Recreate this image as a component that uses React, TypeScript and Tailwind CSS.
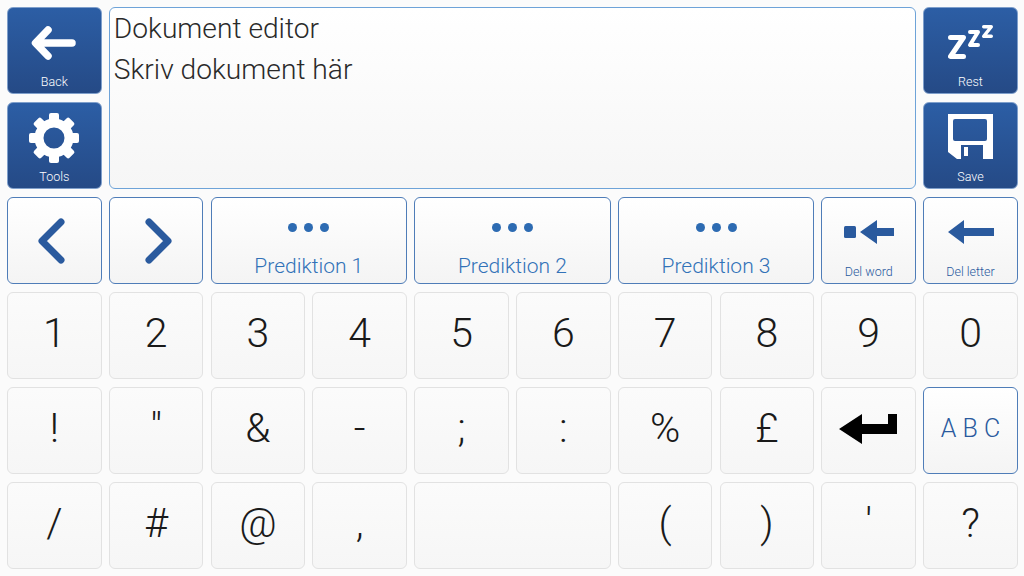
const dark = "rounded-[6px] border border-[#7f9fcb] bg-gradient-to-b from-[#2c5ea5] to-[#254a86] text-white flex flex-col items-center";
const light = "rounded-[6px] border border-[#4f7db8] bg-gradient-to-b from-white to-[#f4f4f4] text-[#2a5a9e] flex flex-col items-center";

function Back() {
  return (
    <svg width="46" height="34" viewBox="0 0 46 34" fill="none" stroke="#fff" strokeWidth="7.5" strokeLinecap="round" strokeLinejoin="round">
      <path d="M41 17H5M17 4 4.5 17 17 30" />
    </svg>
  );
}

function Gear() {
  const teeth = [0, 45, 90, 135, 180, 225, 270, 315];
  return (
    <svg width="52" height="52" viewBox="0 0 52 52" fill="#fff">
      {teeth.map((a) => (
        <rect key={a} x="21" y="1" width="10" height="12" rx="2" transform={`rotate(${a} 26 26)`} />
      ))}
      <circle cx="26" cy="26" r="15" fill="none" stroke="#fff" strokeWidth="9" />
    </svg>
  );
}

function Zzz() {
  return (
    <svg width="46" height="34" viewBox="0 0 46 34" fill="none" stroke="#fff" strokeLinecap="round" strokeLinejoin="round" className="mb-[2px]">
      <path d="M2.5 12.5h13L2.5 31.5h13" strokeWidth="5" />
      <path d="M22 7h8l-8 13h8" strokeWidth="4" />
      <path d="M35.7 1.7h7.6l-7.6 9.6h7.6" strokeWidth="3.4" />
    </svg>
  );
}

function Floppy() {
  return (
    <svg width="46" height="46" viewBox="0 0 46 46" className="mb-[2px]">
      <path
        fillRule="evenodd"
        fill="#fff"
        d="M0 0H45V45H35V31H13V45H9L0 38ZM7 5a2 2 0 0 0-2 2V25a2 2 0 0 0 2 2H37a2 2 0 0 0 2-2V7a2 2 0 0 0-2-2Z"
      />
      <rect x="16" y="33" width="4" height="9" fill="#fff" />
    </svg>
  );
}

function Chevron({ right }: { right?: boolean }) {
  return (
    <svg width="30" height="48" viewBox="0 0 30 48" fill="none" stroke="#2a5a9e" strokeWidth="7" strokeLinecap="round" strokeLinejoin="round">
      <path d={right ? "M5 5 24 24 5 43" : "M25 5 6 24 25 43"} />
    </svg>
  );
}

function DelArrow() {
  return (
    <svg width="46" height="24" viewBox="0 0 46 24" fill="#2a5a9e">
      <path d="M0 12 16 0V8H46V16H16V24Z" />
    </svg>
  );
}

function DelWord() {
  return (
    <svg width="50" height="24" viewBox="0 0 50 24" fill="#2a5a9e">
      <rect x="0" y="6" width="12" height="12" rx="1.5" />
      <path d="M16 12 33 0V8H50V16H33V24Z" />
    </svg>
  );
}

function Enter() {
  return (
    <svg width="60" height="32" viewBox="0 0 60 32" fill="#000">
      <path d="M0 16 23 1V11H49V1H58V21H23V31Z" />
    </svg>
  );
}

function Dark({ label, children, className }: { label: string; children: React.ReactNode; className: string }) {
  return (
    <div className={`${dark} ${className}`}>
      <div className="flex-1 flex items-center justify-center pt-[2px]">{children}</div>
      <span className="text-[12.5px] leading-[14px] mb-[4px] font-light">{label}</span>
    </div>
  );
}

function Light({ label, children }: { label: string; children: React.ReactNode }) {
  return (
    <div className={light}>
      <div className="flex-1 flex items-center justify-center">{children}</div>
      <span className="text-[12.5px] leading-[14px] mb-[4px] font-light">{label}</span>
    </div>
  );
}

function Prediction({ label }: { label: string }) {
  return (
    <div className={`${light} col-span-2 text-[#3272b8]`}>
      <div className="flex-1 flex items-center justify-center gap-[7px] pt-[2px]">
        <span className="w-[9px] h-[9px] rounded-full bg-[#2d6bb2]" />
        <span className="w-[9px] h-[9px] rounded-full bg-[#2d6bb2]" />
        <span className="w-[9px] h-[9px] rounded-full bg-[#2d6bb2]" />
      </div>
      <span className="text-[21px] leading-[24px] mb-[5px] font-light">{label}</span>
    </div>
  );
}

function Key({ children, className = "" }: { children?: React.ReactNode; className?: string }) {
  return (
    <div className={`rounded-[6px] border border-[#e2e2e2] bg-gradient-to-b from-[#fbfbfb] to-[#f6f6f6] flex items-center justify-center pb-[4px] text-[41px] font-light text-[#1a1a1a] leading-none ${className}`}>
      {children}
    </div>
  );
}

export default function App() {
  const row1 = ["1", "2", "3", "4", "5", "6", "7", "8", "9", "0"];
  const row2 = ["!", '"', "&", "-", ";", ":", "%", "£"];
  return (
    <div className="w-[1024px] h-[576px] overflow-hidden bg-[#fbfbfb] pt-[7px] pl-[7px] pr-[6.2px] pb-[7px] grid grid-cols-10 grid-rows-6 gap-x-[7.2px] gap-y-[8px] font-['Roboto',sans-serif]">
      <Dark label="Back" className="col-start-1 row-start-1"><Back /></Dark>
      <Dark label="Tools" className="col-start-1 row-start-2"><Gear /></Dark>
      <div className="col-start-2 col-span-8 row-start-1 row-span-2 rounded-[6px] border border-[#6ea3d8] bg-gradient-to-b from-white to-[#f6f6f6] px-[4px] text-[28.2px] leading-[40px] font-light text-[#2a2a2a] pt-[1px]">
        <div>Dokument editor</div>
        <div className="mt-[1px]">Skriv dokument här</div>
      </div>
      <Dark label="Rest" className="col-start-10 row-start-1"><Zzz /></Dark>
      <Dark label="Save" className="col-start-10 row-start-2"><Floppy /></Dark>

      <div className={`${light} justify-center`}><div className="mr-[6px]"><Chevron /></div></div>
      <div className={`${light} justify-center`}><div className="ml-[6px]"><Chevron right /></div></div>
      <Prediction label="Prediktion 1" />
      <Prediction label="Prediktion 2" />
      <Prediction label="Prediktion 3" />
      <Light label="Del word"><DelWord /></Light>
      <Light label="Del letter"><DelArrow /></Light>

      {row1.map((k) => <Key key={k}>{k}</Key>)}
      {row2.map((k) => <Key key={k}>{k}</Key>)}
      <Key className="pb-0"><Enter /></Key>
      <div className={`${light} justify-center pb-[3px] text-[25px] font-light whitespace-pre`}>A B C</div>

      <Key>/</Key>
      <Key>#</Key>
      <Key>@</Key>
      <Key>,</Key>
      <Key className="col-span-2 border-[#cfcfcf]" />
      <Key>(</Key>
      <Key>)</Key>
      <Key>'</Key>
      <Key>?</Key>
    </div>
  );
}
